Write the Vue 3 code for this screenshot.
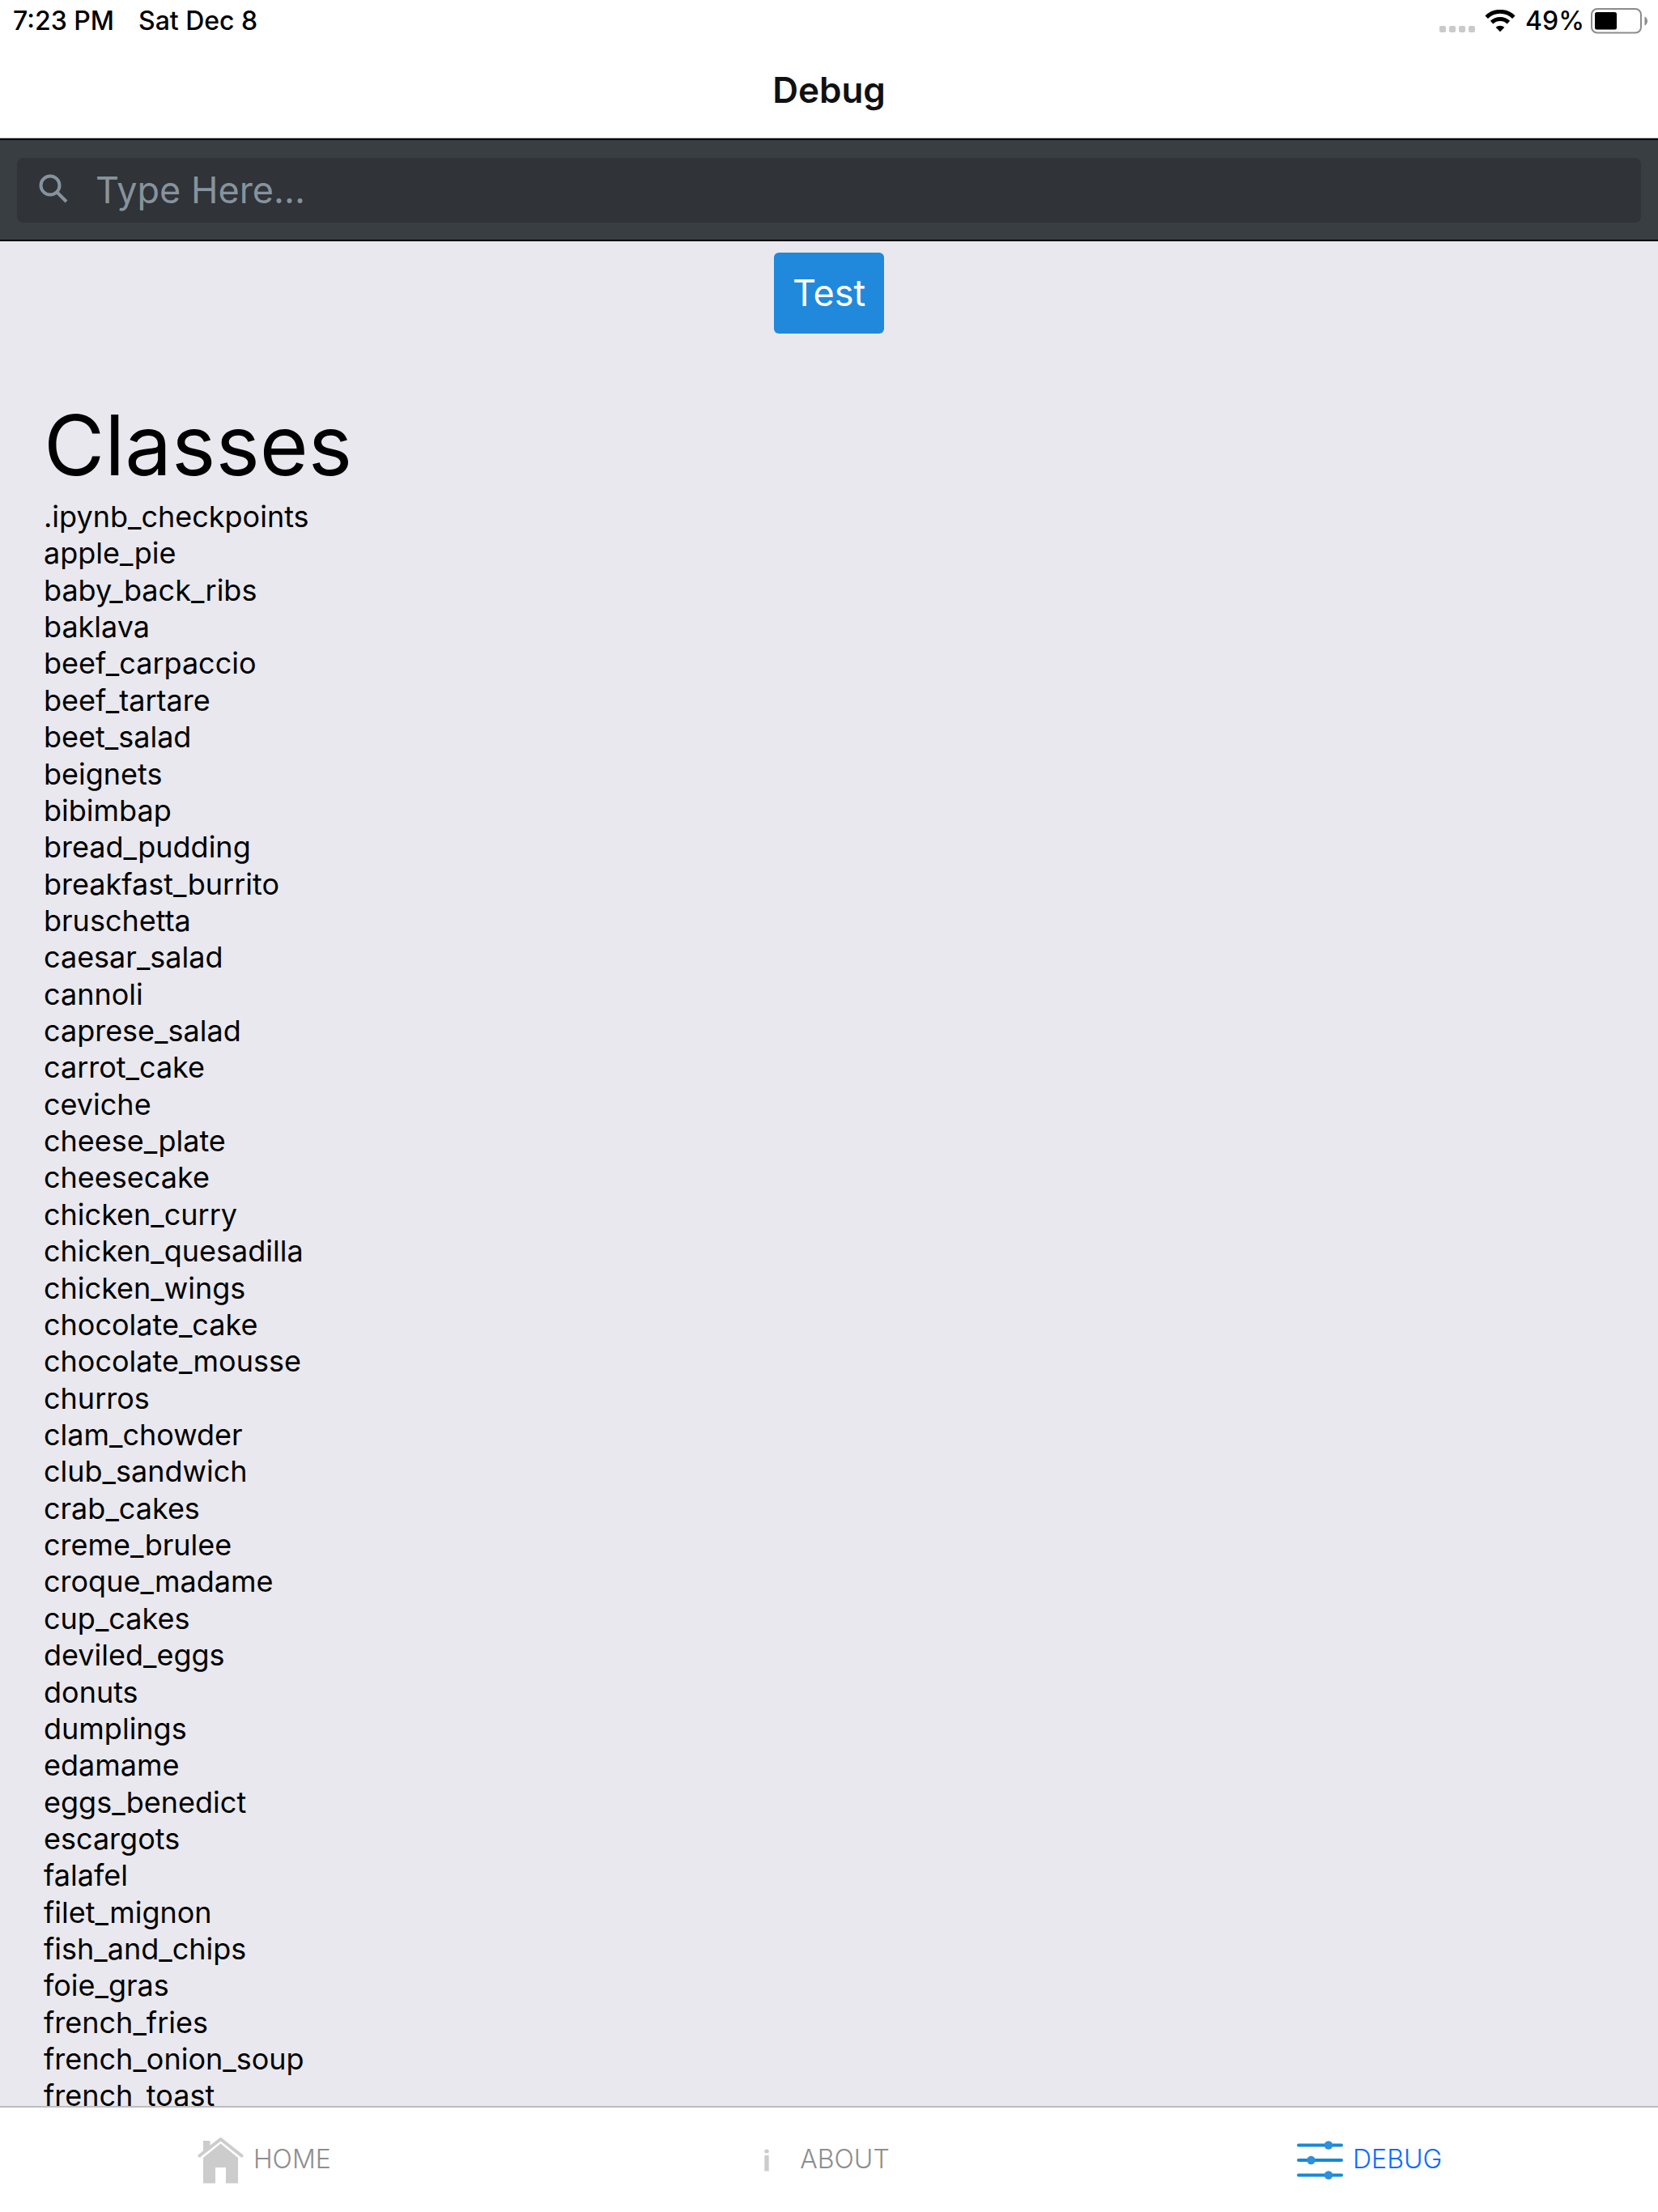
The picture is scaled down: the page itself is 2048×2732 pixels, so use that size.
<script setup>
import { ref } from 'vue'

const query = ref('')

const classes = [
  '.ipynb_checkpoints', 'apple_pie', 'baby_back_ribs', 'baklava', 'beef_carpaccio',
  'beef_tartare', 'beet_salad', 'beignets', 'bibimbap', 'bread_pudding',
  'breakfast_burrito', 'bruschetta', 'caesar_salad', 'cannoli', 'caprese_salad',
  'carrot_cake', 'ceviche', 'cheese_plate', 'cheesecake', 'chicken_curry',
  'chicken_quesadilla', 'chicken_wings', 'chocolate_cake', 'chocolate_mousse', 'churros',
  'clam_chowder', 'club_sandwich', 'crab_cakes', 'creme_brulee', 'croque_madame',
  'cup_cakes', 'deviled_eggs', 'donuts', 'dumplings', 'edamame',
  'eggs_benedict', 'escargots', 'falafel', 'filet_mignon', 'fish_and_chips',
  'foie_gras', 'french_fries', 'french_onion_soup', 'french_toast',
]
</script>

<template>
  <div class="screen">
    <header class="top">
      <div class="status">
        <div class="status-side">
          <span>7:23 PM</span>
          <span>Sat Dec 8</span>
        </div>
        <div class="status-side right">
          <svg class="signal" width="44" height="8" viewBox="0 0 44 8" aria-hidden="true">
            <rect x="0" width="8" height="8" rx="2" />
            <rect x="12" width="8" height="8" rx="2" />
            <rect x="24" width="8" height="8" rx="2" />
            <rect x="36" width="8" height="8" rx="2" />
          </svg>
          <svg class="wifi" width="38" height="28" viewBox="0 0 38 28" aria-hidden="true">
            <path d="M2.2 9.2A24 24 0 0 1 35.8 9.2" />
            <path d="M8.6 15.6A15 15 0 0 1 29.4 15.6" />
            <path class="solid" d="M19 27.200L13.600 21.800A7.800 7.800 0 0 1 24.400 21.800Z" />
          </svg>
          <span class="percent">49%</span>
          <svg class="battery" width="71" height="32" viewBox="0 0 71 32" aria-hidden="true">
            <rect class="shell" x="1" y="1" width="61" height="29.500" rx="7" />
            <rect x="5" y="5" width="27" height="21.500" rx="2.500" />
            <path class="cap" d="M66.500 10.500C71.200 12.500 71.200 19.500 66.500 21.500Z" />
          </svg>
        </div>
      </div>
      <h1 class="title">Debug</h1>
    </header>

    <form class="search" role="search" @submit.prevent>
      <label class="field">
        <svg width="36" height="36" viewBox="0 0 36 36" aria-hidden="true">
          <circle cx="14" cy="14" r="11.500" />
          <path d="M22.500 22.500L34 34" />
        </svg>
        <input v-model="query" type="text" placeholder="Type Here..." aria-label="Search classes" />
      </label>
    </form>

    <main class="content">
      <button class="test" type="button">Test</button>
      <section class="classes">
        <h2>Classes</h2>
        <ul>
          <li v-for="name in classes" :key="name">{{ name }}</li>
        </ul>
      </section>
    </main>

    <nav class="tabs">
      <a class="tab" href="#home">
        <svg width="57" height="58" viewBox="0 0 57 58" aria-hidden="true">
          <path d="M7 5H15.500V12.500L7 19Z" />
          <path class="roof" d="M2.500 23.500L28.500 3L54.500 23.500" />
          <path d="M28.500 8.500L50 26V57.500H35V38H22V57.500H7V26Z" />
        </svg>
        <span>HOME</span>
      </a>
      <a class="tab" href="#about">
        <svg width="57" height="58" viewBox="0 0 57 58" aria-hidden="true">
          <ellipse cx="28" cy="18" rx="2.800" ry="2.500" />
          <rect x="25.300" y="23" width="5.400" height="19.500" />
        </svg>
        <span>ABOUT</span>
      </a>
      <a class="tab active" href="#debug" aria-current="page">
        <svg width="57" height="58" viewBox="0 0 57 58" aria-hidden="true">
          <path class="rail" d="M2 10.500H55M2 29H55M2 47.500H55" />
          <circle cx="39" cy="10.500" r="5.200" />
          <circle cx="17.500" cy="29" r="5.200" />
          <circle cx="39" cy="47.500" r="5.200" />
        </svg>
        <span>DEBUG</span>
      </a>
    </nav>
  </div>
</template>

<style>
body {
  margin: 0;
}
</style>

<style scoped>
.screen {
  display: flex;
  flex-direction: column;
  height: 100vh;
  overflow: hidden;
  background: #e9e8ee;
  color: #000;
  font-family: Inter, Roboto, "Liberation Sans", sans-serif;
}

.top {
  flex: none;
  background: #fff;
  border-bottom: 1px solid #b2b2b2;
}

.status {
  display: flex;
  justify-content: space-between;
  height: 52px;
  padding: 0 12px 0 16px;
  font-size: 32px;
  font-weight: 500;
  line-height: 52px;
}

.status-side {
  display: flex;
  gap: 30px;
}

.status-side.right {
  align-items: center;
  gap: 12px;
}

.signal {
  fill: #cacaca;
  margin-top: 20px;
}

.wifi {
  fill: none;
  stroke: #000;
  stroke-width: 5;
}

.wifi .solid {
  fill: #000;
  stroke: none;
}

.percent {
  margin-right: -4px;
}

.battery .shell {
  fill: none;
  stroke: #8c8c8c;
  stroke-width: 2;
}

.battery .cap {
  fill: #8c8c8c;
}

.title {
  margin: 0;
  color: #111;
  font-size: 44px;
  font-weight: 600;
  line-height: 118px;
  text-align: center;
}

.search {
  flex: none;
  padding: 22px 21px 21px;
  background: #393e42;
  border-top: 2px solid #000;
  border-bottom: 2px solid #000;
}

.field {
  display: flex;
  align-items: center;
  gap: 34px;
  height: 80px;
  padding: 0 27px;
  border-radius: 8px;
  background: #303337;
}

.field svg {
  flex: none;
  margin-bottom: 4px;
  fill: none;
  stroke: #86939e;
  stroke-width: 4;
}

.field input {
  flex: 1;
  min-width: 0;
  height: 80px;
  padding: 0 0 2px;
  box-sizing: border-box;
  border: 0;
  outline: 0;
  background: transparent;
  color: #86939e;
  font: inherit;
  font-size: 45px;
}

.field input::placeholder {
  color: #86939e;
  opacity: 1;
}

.content {
  flex: 1;
  min-height: 0;
  overflow: hidden;
}

.test {
  display: block;
  margin: 14px auto 0;
  padding: 0 23px;
  border: 0;
  border-radius: 6px;
  background: #2089dc;
  color: #fff;
  font: inherit;
  font-size: 45px;
  line-height: 100px;
}

.classes {
  padding: 72px 54px 0;
}

.classes h2 {
  margin: 0;
  font-size: 103px;
  font-weight: 400;
  line-height: 132px;
}

.classes ul {
  margin: 0;
  padding: 0;
  list-style: none;
  font-size: 36px;
  line-height: 1.26;
}

.tabs {
  display: flex;
  flex: none;
  height: 129px;
  border-top: 2px solid #bdbdc0;
  background: #fff;
}

.tab {
  display: flex;
  flex: 1;
  align-items: center;
  justify-content: center;
  gap: 12px;
  padding-right: 30px;
  color: #8e8e8e;
  font-size: 32px;
  font-weight: 300;
  text-decoration: none;
}

.tab span {
  padding-bottom: 2px;
}

.tab svg {
  fill: #cccccc;
}

.tab .roof {
  fill: none;
  stroke: #cccccc;
  stroke-width: 4;
  stroke-linecap: round;
  stroke-linejoin: round;
}

.tab.active {
  color: #0a6cff;
}

.tab.active svg {
  fill: #2d8fdd;
}

.tab .rail {
  stroke: #148ad8;
  stroke-width: 4;
  stroke-linecap: round;
}
</style>
